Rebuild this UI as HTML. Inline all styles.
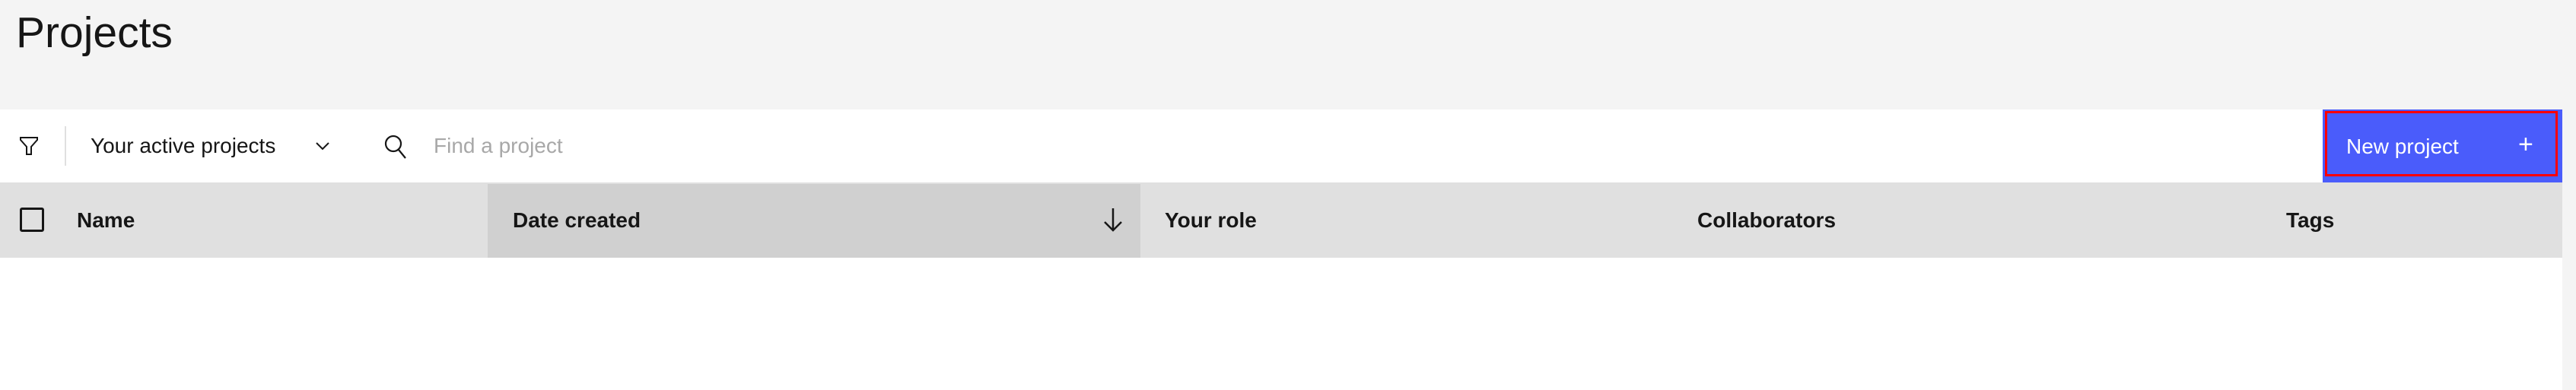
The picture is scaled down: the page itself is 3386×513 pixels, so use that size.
<!DOCTYPE html>
<html><head><style>
*{margin:0;padding:0;box-sizing:border-box}
body{width:3386px;height:513px;background:#fff;font-family:"Liberation Sans",sans-serif;position:relative;overflow:hidden;color:#161616}
.abs{position:absolute}
</style></head><body>
<div class="abs" style="left:0;top:0;width:3386px;height:144px;background:#f4f4f4"></div>
<div class="abs" style="left:21px;top:10px;font-size:57px;line-height:66px">Projects</div>
<div class="abs" style="left:3368px;top:144px;width:18px;height:369px;background:#f4f4f4"></div>
<!-- toolbar -->
<svg class="abs" style="left:24px;top:178px" width="28" height="28" viewBox="0 0 28 28"><path d="M3 3h22v3l-8 9v10h-6V15L3 6z" fill="none" stroke="#161616" stroke-width="2"/></svg>
<div class="abs" style="left:85px;top:166px;width:2px;height:52px;background:#e0e0e0"></div>
<div class="abs" style="left:119px;top:174px;font-size:28px;line-height:36px">Your active projects</div>
<svg class="abs" style="left:412px;top:184px" width="24" height="16" viewBox="0 0 24 16"><path d="M4 4l8 8 8-8" fill="none" stroke="#161616" stroke-width="2"/></svg>
<svg class="abs" style="left:504px;top:176px" width="32" height="34" viewBox="0 0 32 34"><circle cx="13" cy="13" r="10" fill="none" stroke="#161616" stroke-width="2.2"/><path d="M20 21l9 11" stroke="#161616" stroke-width="2.2"/></svg>
<div class="abs" style="left:570px;top:174px;font-size:28px;line-height:36px;color:#a8a8a8">Find a project</div>
<div class="abs" style="left:3053px;top:144px;width:315px;height:96px;background:#4a5cfb"></div>
<div class="abs" style="left:3056px;top:146px;width:306px;height:86px;border:3px solid #f00"></div>
<div class="abs" style="left:3084px;top:175px;font-size:28px;line-height:36px;color:#fff">New project</div>
<div class="abs" style="left:3310px;top:170px;font-size:34px;line-height:40px;color:#fff">+</div>
<!-- header -->
<div class="abs" style="left:0;top:240px;width:3368px;height:99px;background:#e0e0e0"></div>
<div class="abs" style="left:641px;top:242px;width:858px;height:97px;background:#d0d0d0"></div>
<div class="abs" style="left:26px;top:273px;width:32px;height:32px;border:3px solid #161616;border-radius:3px"></div>
<div class="abs" style="left:101px;top:272px;font-size:28px;line-height:36px;font-weight:bold">Name</div>
<div class="abs" style="left:674px;top:272px;font-size:28px;line-height:36px;font-weight:bold">Date created</div>
<svg class="abs" style="left:1448px;top:272px" width="30" height="34" viewBox="0 0 30 34"><path d="M15 2v29M4 20l11 11 11-11" fill="none" stroke="#161616" stroke-width="2.5"/></svg>
<div class="abs" style="left:1531px;top:272px;font-size:28px;line-height:36px;font-weight:bold">Your role</div>
<div class="abs" style="left:2231px;top:272px;font-size:28px;line-height:36px;font-weight:bold">Collaborators</div>
<div class="abs" style="left:3005px;top:272px;font-size:28px;line-height:36px;font-weight:bold">Tags</div>
</body></html>
